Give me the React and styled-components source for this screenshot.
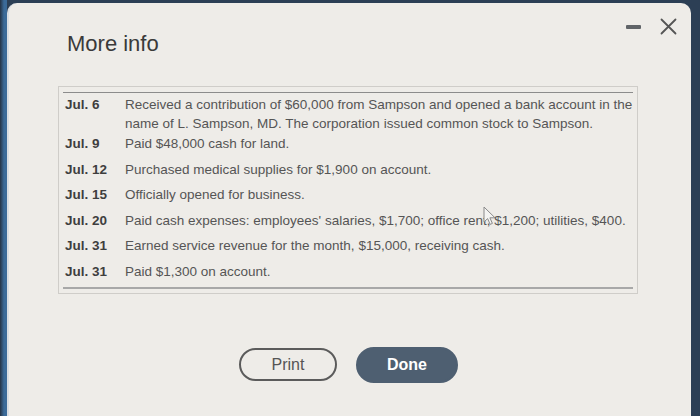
import styled, { createGlobalStyle } from "styled-components";

const GlobalStyle = createGlobalStyle`
  html, body {
    margin: 0;
    padding: 0;
    background: #2c3f55;
    font-family: "Liberation Sans", Arial, sans-serif;
  }
`;

const entries = [
  {
    date: "Jul. 6",
    text: "Received a contribution of $60,000 from Sampson and opened a bank account in the name of L. Sampson, MD. The corporation issued common stock to Sampson.",
  },
  { date: "Jul. 9", text: "Paid $48,000 cash for land." },
  { date: "Jul. 12", text: "Purchased medical supplies for $1,900 on account." },
  { date: "Jul. 15", text: "Officially opened for business." },
  {
    date: "Jul. 20",
    text: "Paid cash expenses: employees' salaries, $1,700; office rent, $1,200; utilities, $400.",
  },
  { date: "Jul. 31", text: "Earned service revenue for the month, $15,000, receiving cash." },
  { date: "Jul. 31", text: "Paid $1,300 on account." },
];

function Row({ date, text, first }) {
  return (
    <EntryRow first={first}>
      <DateCell>{date}</DateCell>
      <TextCell>{text}</TextCell>
    </EntryRow>
  );
}

function Pointer() {
  return (
    <PointerBox>
      <svg width="14" height="20" viewBox="0 0 14 20">
        <path
          d="M1 1 L1 16 L4.6 12.6 L7.2 18.4 L9.4 17.4 L6.9 11.8 L12 11.8 Z"
          fill="#f4f4f2"
          stroke="#8a8a8a"
          strokeWidth="1"
          strokeLinejoin="round"
        />
      </svg>
    </PointerBox>
  );
}

export default function App() {
  return (
    <>
      <GlobalStyle />
      <Screen>
        <Panel>
          <Header>
            <Title>More info</Title>
            <Controls>
              <Minimize />
              <svg width="17" height="17" viewBox="0 0 17 17">
                <path d="M1.5 1.5 L15.5 15.5 M15.5 1.5 L1.5 15.5" stroke="#555" strokeWidth="1.8" strokeLinecap="round" />
              </svg>
            </Controls>
          </Header>
          <TableBox>
            <TableInner>
              {entries.map((e, i) => (
                <Row key={i} date={e.date} text={e.text} first={i === 0} />
              ))}
            </TableInner>
          </TableBox>
          <ButtonRow>
            <Button>Print</Button>
            <Button primary>Done</Button>
          </ButtonRow>
          <Pointer />
        </Panel>
      </Screen>
    </>
  );
}

const Screen = styled.div`
  height: 416px;
  padding: 3px 9px 0 7px;
  box-sizing: border-box;
  overflow: hidden;
  background: linear-gradient(90deg, #243244 0, #3b6a98 4px, #3b6a98 7px, #2c3f55 7px);
`;

const Panel = styled.div`
  position: relative;
  height: 100%;
  background: #eeece8;
  border-left: 2px solid #d9dde2;
  border-radius: 10px 10px 0 0;
  box-sizing: border-box;
  padding: 14px 14px 0 49px;
`;

const Header = styled.div`
  display: flex;
  justify-content: space-between;
  align-items: flex-start;
`;

const Title = styled.h1`
  margin: 14px 0 0 9px;
  font-size: 22px;
  line-height: 26px;
  font-weight: 400;
  color: #3a3a3a;
`;

const Controls = styled.div`
  display: flex;
  align-items: center;
  gap: 19px;
  padding-top: 1px;
`;

const Minimize = styled.span`
  width: 15px;
  height: 4px;
  background: #606468;
  border-radius: 1px;
`;

const TableBox = styled.div`
  margin-top: 29px;
  width: 580px;
  border: 1px solid #cfcdc9;
  padding: 5px 2px 4px 4px;
  box-sizing: border-box;
`;

const TableInner = styled.div`
  border-top: 1px solid #8c8c8c;
  border-bottom: 2px solid #a8a8a8;
  padding-bottom: 2px;
  margin-right: 2px;
`;

const EntryRow = styled.div`
  display: flex;
  align-items: flex-start;
  padding: ${({ first }) => (first ? "2px 0 0" : "3px 0 3.3px")};
  margin-bottom: ${({ first }) => (first ? "-2px" : "0")};
  margin-right: -4px;
  line-height: ${({ first }) => (first ? "19px" : "19.3px")};
  font-size: 13.5px;
`;

const DateCell = styled.div`
  width: 60px;
  flex: none;
  padding-left: 2px;
  font-weight: 700;
  color: #3e3e3e;
`;

const TextCell = styled.div`
  flex: 1;
  color: #555555;
`;

const ButtonRow = styled.div`
  display: flex;
  justify-content: center;
  align-items: center;
  gap: 19px;
  margin-top: 53px;
  padding-right: 38px;
`;

const Button = styled.button`
  height: ${({ primary }) => (primary ? "36px" : "33px")};
  width: ${({ primary }) => (primary ? "102px" : "98px")};
  border-radius: 18px;
  border: 2px solid ${({ primary }) => (primary ? "#4e5f71" : "#5b5b5b")};
  background: ${({ primary }) => (primary ? "#4e5f71" : "transparent")};
  color: ${({ primary }) => (primary ? "#ffffff" : "#555555")};
  font-family: "Liberation Sans", Arial, sans-serif;
  font-size: 16px;
  font-weight: ${({ primary }) => (primary ? 700 : 400)};
  padding: 0;
`;

const PointerBox = styled.div`
  position: absolute;
  left: 474px;
  top: 203px;
  line-height: 0;
`;
